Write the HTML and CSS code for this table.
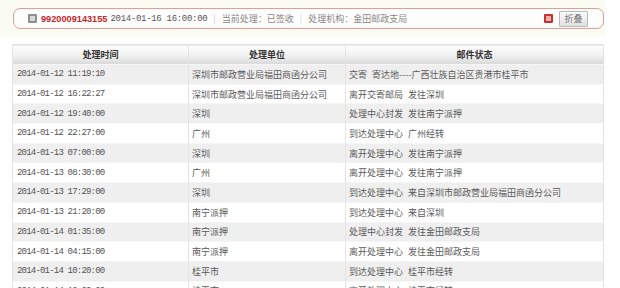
FILE: index.html
```html
<!DOCTYPE html>
<html lang="zh">
<head>
<meta charset="utf-8">
<title>邮件跟踪</title>
<link rel="stylesheet" href="styles.css">
</head>
<body>
<div class="top">
  <div class="bar">
    <span class="ico-gray"></span>
    <span class="num">9920009143155</span>
    <span class="date">2014-01-16 16:00:00</span>
    <span class="sep">|</span>
    <span class="info">当前处理：已签收</span>
    <span class="sep">|</span>
    <span class="info">处理机构：金田邮政支局</span>
    <span class="spacer"></span>
    <span class="ico-red"></span>
    <button class="btn">折叠</button>
  </div>
</div>
<table class="grid">
  <thead>
    <tr><th class="c1">处理时间</th><th class="c2">处理单位</th><th class="c3">邮件状态</th></tr>
  </thead>
  <tbody>
    <tr><td class="t">2014-01-12 11:19:10</td><td>深圳市邮政营业局福田商函分公司</td><td>交寄 寄达地----广西壮族自治区贵港市桂平市</td></tr>
    <tr><td class="t">2014-01-12 16:22:27</td><td>深圳市邮政营业局福田商函分公司</td><td>离开交寄邮局 发往深圳</td></tr>
    <tr><td class="t">2014-01-12 19:40:00</td><td>深圳</td><td>处理中心封发 发往南宁派押</td></tr>
    <tr><td class="t">2014-01-12 22:27:00</td><td>广州</td><td>到达处理中心 广州经转</td></tr>
    <tr><td class="t">2014-01-13 07:00:00</td><td>深圳</td><td>离开处理中心 发往南宁派押</td></tr>
    <tr><td class="t">2014-01-13 08:30:00</td><td>广州</td><td>离开处理中心 发往南宁派押</td></tr>
    <tr><td class="t">2014-01-13 17:29:00</td><td>深圳</td><td>到达处理中心 来自深圳市邮政营业局福田商函分公司</td></tr>
    <tr><td class="t">2014-01-13 21:20:00</td><td>南宁派押</td><td>到达处理中心 来自深圳</td></tr>
    <tr><td class="t">2014-01-14 01:35:00</td><td>南宁派押</td><td>处理中心封发 发往金田邮政支局</td></tr>
    <tr><td class="t">2014-01-14 04:15:00</td><td>南宁派押</td><td>离开处理中心 发往金田邮政支局</td></tr>
    <tr><td class="t">2014-01-14 10:20:00</td><td>桂平市</td><td>到达处理中心 桂平市经转</td></tr>
    <tr><td class="t">2014-01-14 12:00:00</td><td>桂平市</td><td>离开处理中心 桂平市经转</td></tr>
  </tbody>
</table>
</body>
</html>
```
FILE: styles.css
```css
html, body {
  margin: 0;
  padding: 0;
  background: #ffffff;
  font-family: "Noto Sans CJK SC", sans-serif;
  font-size: 9px;
  color: #555;
}
.top {
  width: 605px;
  background: #fbfcf1;
  padding: 8px 0 8px 0;
  box-sizing: border-box;
  height: 37px;
}
.bar {
  margin-left: 13px;
  width: 591px;
  height: 21px;
  box-sizing: border-box;
  border: 1px solid #d9a2a2;
  border-radius: 7px;
  background: #fefefc;
  box-shadow: inset 0 0 2px rgba(200, 150, 150, 0.25);
  display: flex;
  align-items: center;
  padding-left: 14px;
  padding-right: 15px;
}
.ico-gray {
  width: 5px;
  height: 5px;
  border: 2px solid #8f8f8f;
  background: #d9d9d9;
  border-radius: 1px;
  margin-right: 4px;
}
.ico-red {
  width: 5px;
  height: 5px;
  border: 2px solid #c43232;
  background: #f0b0b0;
  border-radius: 1px;
  margin-right: 6px;
}
.num {
  font-family: "Liberation Sans", sans-serif;
  font-weight: bold;
  font-size: 9.2px;
  color: #c3282d;
  margin-right: 3px;
}
.date {
  font-family: "Liberation Mono", monospace;
  font-size: 9px;
  color: #555;
  letter-spacing: -0.3px;
}
.sep {
  color: #ccc;
  margin: 0 6px;
}
.info {
  color: #888;
}
.spacer {
  flex: 1;
}
.btn {
  font-family: "Noto Sans CJK SC", sans-serif;
  font-size: 9px;
  color: #777;
  height: 16px;
  width: 29px;
  padding: 0;
  line-height: 14px;
  border: 1px solid #b9b9b9;
  border-radius: 1px;
  background: linear-gradient(#fbfbfb, #e2e2e2);
}
.grid {
  margin: 7px 0 0 12px;
  width: 592px;
  border-collapse: collapse;
  border: 1px solid #e2e2e2;
  table-layout: fixed;
}
.grid th {
  height: 19px;
  padding: 0;
  font-weight: bold;
  color: #333;
  font-size: 9px;
  text-align: center;
  background: linear-gradient(#fdfdfd 0%, #f0f0f0 55%, #d9d9d9 100%);
  border-left: 1px solid #e4e4e4;
}
.grid th.c1 { width: 175px; }
.grid th.c2 { width: 156px; }
.grid td {
  height: 19.7px;
  padding: 0 0 0 3px;
  box-sizing: border-box;
  color: #5a5a5a;
  border-left: 1px solid #e4e4e4;
  border-top: 1px solid #f6f6f6;
  white-space: nowrap;
  overflow: hidden;
  word-spacing: 3px;
}
.grid td.t {
  padding-left: 4px;
  font-family: "Liberation Mono", monospace;
  letter-spacing: -0.8px;
  word-spacing: 0;
  color: #555;
}
.grid tbody tr:nth-child(odd) td {
  background: #efefef;
}
.grid tbody tr:nth-child(even) td {
  background: #ffffff;
}
```
